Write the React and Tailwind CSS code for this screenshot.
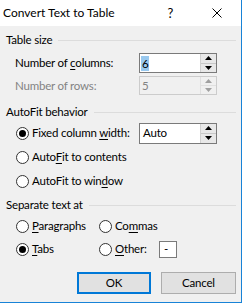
import React from "react";

const font = { fontFamily: 'Lato, "Noto Sans", sans-serif' };

function U({ children }) {
  return <span className="underline underline-offset-[2px] decoration-[1px]">{children}</span>;
}

function Header({ label, mt }) {
  return (
    <div className={`flex items-center h-[16px] pl-[6px] pr-[5px] ${mt}`}>
      <span className="text-[#000] whitespace-nowrap">{label}</span>
      <div className="flex-1 h-px bg-[#dcdcdc] ml-[6px]" />
    </div>
  );
}

function Spin({ disabled }) {
  const c = disabled ? "#a0a0a0" : "#000";
  return (
    <div className={`w-[16px] h-full flex flex-col border-l ${disabled ? "border-[#e0e0e0] bg-[#f0f0f0]" : "border-[#d0d0d0] bg-[#e8e8e8]"}`}>
      <div className={`flex-1 flex items-center justify-center border-b ${disabled ? "border-[#e0e0e0]" : "border-[#c8c8c8]"}`}>
        <svg width="7" height="4" viewBox="0 0 7 4"><path d="M0 4 L3.5 0 L7 4 Z" fill={c} /></svg>
      </div>
      <div className="flex-1 flex items-center justify-center">
        <svg width="7" height="4" viewBox="0 0 7 4"><path d="M0 0 L3.5 4 L7 0 Z" fill={c} /></svg>
      </div>
    </div>
  );
}

function Radio({ checked }) {
  return (
    <div className="w-[13px] h-[13px] rounded-full border border-[#333] bg-white flex items-center justify-center shrink-0">
      {checked && <div className="w-[7px] h-[7px] rounded-full bg-[#000]" />}
    </div>
  );
}

export default function App() {
  return (
    <div className="w-[244px] h-[305px] bg-white overflow-hidden text-[11.5px] tracking-[-0.2px] leading-[16px] whitespace-nowrap" style={font}>
      <div className="w-[242px] h-[303px] border-r border-b border-[#1883d7] flex flex-col">
        <div className="h-[26px] bg-white flex items-center shrink-0">
          <span className="pl-[3px] text-[#000] text-[12px] tracking-normal">Convert Text to Table</span>
          <span className="ml-auto mr-[39px] text-[13px] text-[#000]">?</span>
          <svg className="mr-[19px]" width="10" height="10" viewBox="0 0 10 10">
            <path d="M0.5 0.5 L9.5 9.5 M9.5 0.5 L0.5 9.5" stroke="#000" strokeWidth="1" />
          </svg>
        </div>
        <div className="flex-1 bg-[#f0f0f0] flex flex-col">
          <Header label="Table size" mt="mt-[6px]" />
          <div className="mt-[5px] h-[20px] flex items-center">
            <span className="pl-[15px] w-[139px] text-[#000]">Number of <U>c</U>olumns:</span>
            <div className="w-[78px] h-[20px] border border-[#7a7a7a] bg-white flex items-center">
              <div className="flex-1 pl-[1px] flex items-center">
                <span className="bg-[#99c9ef] px-[1px] text-[#000] leading-[15px]">6</span>
              </div>
              <Spin />
            </div>
          </div>
          <div className="mt-[3px] h-[19px] flex items-center">
            <span className="pl-[15px] w-[139px] text-[#838383]">Number of rows:</span>
            <div className="w-[78px] h-[19px] border border-[#cccccc] bg-[#f0f0f0] flex items-center">
              <div className="flex-1 pl-[2px] text-[#838383]">5</div>
              <Spin disabled />
            </div>
          </div>
          <Header label="AutoFit behavior" mt="mt-[9px]" />
          <div className="h-[24px] mt-[1px] flex items-center pl-[16px]">
            <Radio checked />
            <span className="ml-[3px] w-[107px] text-[#000]">Fixed column <U>w</U>idth:</span>
            <div className="w-[78px] h-[21px] border border-[#7a7a7a] bg-white flex items-center">
              <div className="flex-1 pl-[3px] text-[#000]">Auto</div>
              <Spin />
            </div>
          </div>
          <div className="h-[24px] flex items-center pl-[16px]">
            <Radio />
            <span className="ml-[3px] text-[#000]">Auto<U>F</U>it to contents</span>
          </div>
          <div className="h-[24px] flex items-center pl-[16px]">
            <Radio />
            <span className="ml-[3px] text-[#000]">AutoFit to win<U>d</U>ow</span>
          </div>
          <Header label="Separate text at" mt="mt-[4px]" />
          <div className="mt-[3px] h-[20px] flex items-center pl-[16px]">
            <div className="w-[83px] flex items-center">
              <Radio />
              <span className="ml-[3px] text-[#000]"><U>P</U>aragraphs</span>
            </div>
            <Radio />
            <span className="ml-[3px] text-[#000]">Co<U>m</U>mas</span>
          </div>
          <div className="mt-[3px] h-[20px] flex items-center pl-[16px]">
            <div className="w-[83px] flex items-center">
              <Radio checked />
              <span className="ml-[3px] text-[#000]"><U>T</U>abs</span>
            </div>
            <Radio />
            <span className="ml-[3px] w-[44px] text-[#000]"><U>O</U>ther:</span>
            <div className="w-[18px] h-[17px] border border-[#7a7a7a] bg-white text-[#000] pl-[4px] leading-[14px]">-</div>
          </div>
          <div className="mt-[13px] flex justify-end gap-[10px] pr-[5px]">
            <div className="w-[74px] h-[22px] border-2 border-[#0078d7] bg-[#e1e1e1] flex items-center justify-center text-[#000]">OK</div>
            <div className="w-[75px] h-[22px] border border-[#adadad] bg-[#e1e1e1] flex items-center justify-center text-[#000]">Cancel</div>
          </div>
        </div>
      </div>
    </div>
  );
}
